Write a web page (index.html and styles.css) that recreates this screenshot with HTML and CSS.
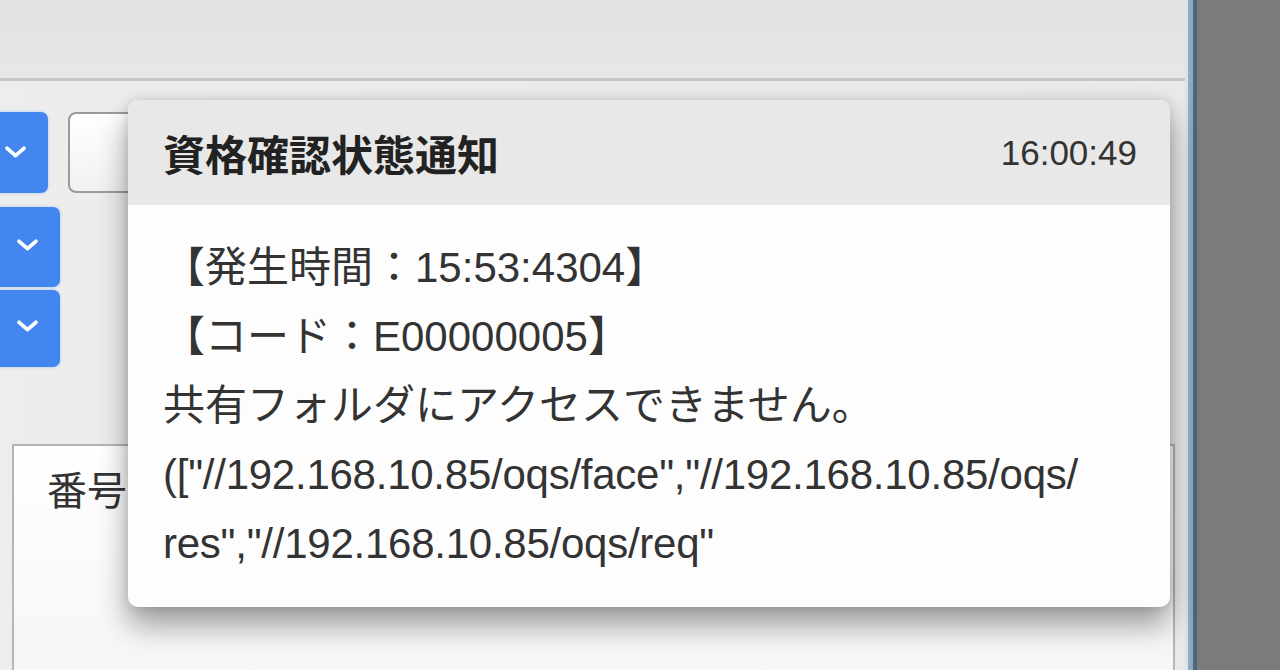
FILE: index.html
```html
<!DOCTYPE html>
<html lang="ja">
<head>
<meta charset="utf-8">
<title>資格確認状態通知</title>
<link rel="stylesheet" href="styles.css">
</head>
<body>
<div class="screen">
  <div class="app">
    <div class="topbar"></div>
    <div class="workspace">
      <div class="row row-first">
        <button class="dd dd-narrow" aria-label="open">
          <svg viewBox="0 0 20 12" width="21" height="13"><path d="M2 2 L10 9 L18 2" fill="none" stroke="#fff" stroke-width="3.6" stroke-linecap="round" stroke-linejoin="round"/></svg>
        </button>
        <div class="field"></div>
      </div>
      <div class="row row-second">
        <button class="dd dd-wide" aria-label="open">
          <svg viewBox="0 0 20 12" width="21" height="13"><path d="M2 2 L10 9 L18 2" fill="none" stroke="#fff" stroke-width="3.6" stroke-linecap="round" stroke-linejoin="round"/></svg>
        </button>
      </div>
      <div class="row row-third">
        <button class="dd dd-wide dd-short" aria-label="open">
          <svg viewBox="0 0 20 12" width="21" height="13"><path d="M2 2 L10 9 L18 2" fill="none" stroke="#fff" stroke-width="3.6" stroke-linecap="round" stroke-linejoin="round"/></svg>
        </button>
      </div>
      <div class="panel">
        <div class="panel-head">番号</div>
      </div>
    </div>
  </div>
  <div class="frame"></div>
  <div class="desktop"></div>

  <div class="toast">
    <div class="toast-head">
      <span class="toast-title">資格確認状態通知</span>
      <span class="toast-time">16:00:49</span>
    </div>
    <div class="toast-body">
      <span class="line">【発生時間：15:53:4304】</span>
      <span class="line">【コード：E00000005】</span>
      <span class="line">共有フォルダにアクセスできません。</span>
      <span class="line url">(["//192.168.10.85/oqs/face","//192.168.10.85/oqs/</span>
      <span class="line url">res","//192.168.10.85/oqs/req"</span>
    </div>
  </div>
</div>
</body>
</html>
```

FILE: styles.css
```css
* { box-sizing: border-box; }
html, body {
  margin: 0;
  padding: 0;
  width: 1280px;
  height: 670px;
  overflow: hidden;
}
body {
  font-family: "Liberation Sans", "Noto Sans CJK JP", sans-serif;
  color: #333;
}
.screen {
  position: relative;
  display: flex;
  width: 1280px;
  height: 670px;
  background: #7b7b7b;
}
.app {
  width: 1185px;
  height: 670px;
  display: flex;
  flex-direction: column;
  background: #ececec;
}
.topbar {
  height: 81px;
  flex: none;
  background: linear-gradient(#e2e2e2, #e7e7e7);
  border-bottom: 3px solid #c6c6c6;
}
.workspace {
  flex: 1;
  display: flex;
  flex-direction: column;
  padding-top: 31px;
  background: linear-gradient(90deg, #ededed, #e9e9e9);
}
.row { display: flex; align-items: stretch; }
.row-second { margin-top: 14px; }
.row-third { margin-top: 3px; }
.dd {
  border: none;
  padding: 0;
  margin: 0;
  background: #4386ef;
  border-radius: 0 7px 7px 0;
  box-shadow: 0 0 3px rgba(120, 170, 255, 0.6);
  display: flex;
  align-items: center;
  cursor: pointer;
}
.dd-narrow {
  width: 48px;
  height: 81px;
  padding-left: 5px;
}
.dd-wide {
  width: 60px;
  height: 80px;
  padding-left: 17px;
  padding-bottom: 4px;
}
.dd-short { height: 77px; }
.dd svg { display: block; }
.field {
  margin-left: 20px;
  width: 120px;
  height: 81px;
  border: 2px solid #9b9b9b;
  border-radius: 8px;
  background: linear-gradient(#ffffff, #f1f1f1);
}
.panel {
  margin-top: 77px;
  margin-left: 12px;
  width: 1163px;
  flex: 1;
  border: 2px solid #b5b5b5;
  border-bottom: none;
  background: linear-gradient(#ffffff, #f6f6f6);
}
.panel-head {
  padding: 21px 0 0 33px;
  font-size: 40px;
  line-height: 48px;
  color: #333;
}
.frame {
  width: 12px;
  height: 670px;
  background: linear-gradient(90deg, #d7e3ee 0, #d7e3ee 3px, #93adc4 3px, #8aa5bd 8px, #506a82 8px, #4a6379 12px);
}
.desktop {
  flex: 1;
  height: 670px;
  background: #7b7b7b;
}
.toast {
  position: absolute;
  left: 128px;
  top: 100px;
  width: 1042px;
  height: 507px;
  border-radius: 10px;
  overflow: hidden;
  background: #fdfdfd;
  box-shadow: 0 18px 30px rgba(0, 0, 0, 0.38), 0 0 12px rgba(0, 0, 0, 0.12);
  display: flex;
  flex-direction: column;
  text-spacing-trim: space-all;
}
.toast-head {
  height: 105px;
  flex: none;
  display: flex;
  align-items: center;
  justify-content: space-between;
  padding: 0 33px 0 35px;
  background: #e8e8e8;
}
.toast-title {
  font-size: 42px;
  font-weight: bold;
  color: #222;
}
.toast-time {
  font-size: 35px;
  color: #333;
}
.toast-body {
  padding: 28px 0 0 35px;
  display: flex;
  flex-direction: column;
}
.line {
  display: block;
  font-size: 42px;
  line-height: 69px;
  white-space: nowrap;
  color: #333;
}
.url {
  letter-spacing: -0.25px;
}
```
